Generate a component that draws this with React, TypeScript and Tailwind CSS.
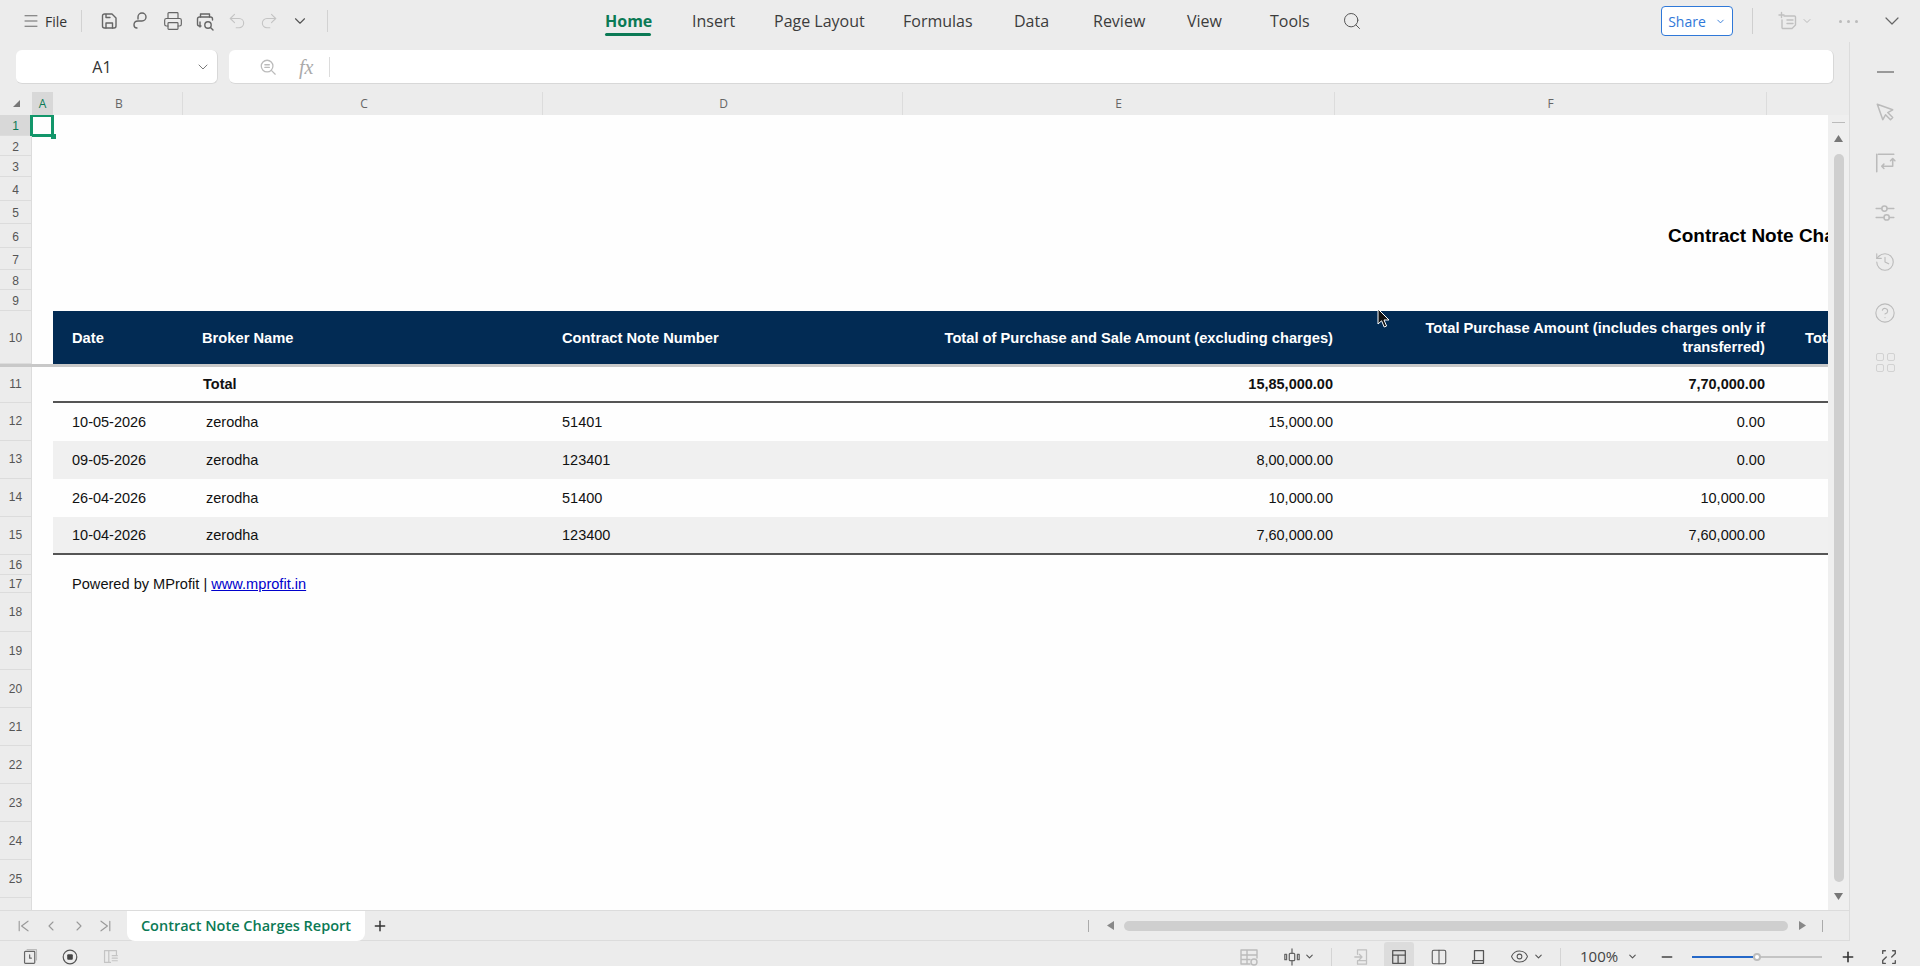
import React from "react";
import { ChevronDown, ChevronLeft, ChevronRight, Search, Plus, Minus, Printer, Undo2, Redo2, History, CircleHelp, Eye, Columns2, Menu } from "lucide-react";

const Svg = ({ s = 20, c = "#666", children, w = 1.4 }: any) => (
  <svg width={s} height={s} viewBox="0 0 20 20" fill="none" stroke={c} strokeWidth={w} strokeLinecap="round" strokeLinejoin="round">
    {children}
  </svg>
);

const rowsTop = [21, 20, 21, 24, 23, 24, 22, 20, 21];

const Cell = ({ w, className = "", children }: any) => (
  <div className={`shrink-0 whitespace-nowrap overflow-hidden ${className}`} style={{ width: w }}>
    {children}
  </div>
);

const COLS = { a: 21, b: 130, c: 360, d: 360, e: 432, f: 432, g: 300 };

const RowHead = ({ n, active }: { n: number; active?: boolean }) => (
  <div className={`w-[32px] shrink-0 h-full flex items-center justify-center text-[12px] border-r border-b border-[#dcdcdc] ${n <= 10 ? "pt-[2px]" : n <= 15 ? "pb-[2px]" : ""} ${active ? "bg-[#d8d8d8] text-[#0b7a55]" : "bg-[#ececec] text-[#555]"}`}>
    {n}
  </div>
);

const data = [
  ["10-05-2026", "zerodha", "51401", "15,000.00", "0.00"],
  ["09-05-2026", "zerodha", "123401", "8,00,000.00", "0.00"],
  ["26-04-2026", "zerodha", "51400", "10,000.00", "10,000.00"],
  ["10-04-2026", "zerodha", "123400", "7,60,000.00", "7,60,000.00"],
];

const sheetFont = "font-['Liberation_Sans',Arial,sans-serif] text-[14.5px] text-[#111]";

function TopBar() {
  return (
    <div className="h-[42px] flex items-center text-[16px] text-[#333]">
      <div className="ml-[22px] w-[18px] text-[#666]"><Menu size={18} strokeWidth={1.3} /></div>
      <span className="ml-[5px] w-[38px] text-[14px]">File</span>
      <div className="h-[22px] w-px bg-[#d2d2d2] -ml-[2px]" />
      <div className="ml-[17px] flex items-center gap-[12px]">
        <Svg><path d="M3.5 5 a2 2 0 0 1 2-2 H13 L17 7 V15 a2 2 0 0 1-2 2 H5.5 a2 2 0 0 1-2-2 Z" /><path d="M7 17 V12 H13.5 V17" /><path d="M7 3.5 V6.5 H11" /></Svg>
        <Svg><path d="M7 8 V6 a4 4 0 1 1 4 4 H7 c-3 0-4 2-4 4 s1.5 3 3 3" /></Svg>
        <Printer size={20} strokeWidth={1.4} color="#666" />
        <Svg><path d="M5.5 6 V3 H14.5 V6" /><path d="M6 15 H4.5 a2 2 0 0 1-2-2 V8 a2 2 0 0 1 2-2 H15.5 a2 2 0 0 1 2 2 V9" /><circle cx="13" cy="14" r="3.2" /><path d="M15.5 16.5 L18 19" /><path d="M5 11 V16" /></Svg>
        <Undo2 size={20} strokeWidth={1.3} color="#c4c4c4" />
        <Redo2 size={20} strokeWidth={1.3} color="#c4c4c4" />
        <ChevronDown size={18} strokeWidth={1.5} color="#555" />
      </div>
      <div className="ml-[18px] h-[22px] w-px bg-[#d2d2d2]" />
      <div className="ml-[277px] flex items-center text-[#3c3c3c]">
        <div className="relative w-[87px]">
          <span className="font-bold text-[#0b7a55]">Home</span>
          <div className="absolute top-[24px] left-0 w-[46px] h-[2.5px] bg-[#0b7a55] rounded" />
        </div>
        <span className="w-[82px]">Insert</span>
        <span className="w-[129px]">Page Layout</span>
        <span className="w-[111px]">Formulas</span>
        <span className="w-[79px]">Data</span>
        <span className="w-[94px]">Review</span>
        <span className="w-[83px]">View</span>
        <span className="w-[72px]">Tools</span>
        <Search size={20} strokeWidth={1.2} color="#555" />
      </div>
      <div className="ml-auto flex items-center">
        <div className="w-[72px] h-[30px] rounded-[4px] border border-[#2f78d8] bg-white flex items-center justify-center gap-[9px] text-[#2f78d8] text-[14px]">
          Share <ChevronDown size={11} strokeWidth={2} />
        </div>
        <div className="ml-[19px] h-[26px] w-px bg-[#cfcfcf]" />
        <div className="ml-[25px]"><Svg c="#c0c0c0"><path d="M6 5 H16.5 a1 1 0 0 1 1 1 V14 L14 17.5 H5 a1 1 0 0 1-1-1 V9" /><path d="M1 4 H6 M3.5 1.5 V6.5" /><path d="M9 9 H15 M9 12.5 H15" /></Svg></div>
        <div className="ml-[3px]"><ChevronDown size={12} strokeWidth={2} color="#bbb" /></div>
        <div className="ml-[26px] flex gap-[5px]">
          <div className="w-[3px] h-[3px] rounded-full bg-[#bbb]" />
          <div className="w-[3px] h-[3px] rounded-full bg-[#bbb]" />
          <div className="w-[3px] h-[3px] rounded-full bg-[#bbb]" />
        </div>
        <div className="ml-[22px] mr-[16px]"><ChevronDown size={24} strokeWidth={1.2} color="#666" /></div>
      </div>
    </div>
  );
}

function FormulaBar() {
  return (
    <div className="h-[50px] pt-[8px] pl-[16px] pr-[15px] flex gap-[11px]">
      <div className="w-[202px] h-[34px] bg-white rounded-[6px] border-b border-r border-[#d8d8d8] flex items-center pr-[6px]">
        <span className="w-[172px] text-center text-[16px] text-[#333]">A1</span>
        <ChevronDown size={16} strokeWidth={1.3} color="#666" className="ml-auto" />
      </div>
      <div className="flex-1 h-[34px] bg-white rounded-[6px] border-b border-r border-[#d8d8d8] flex items-center">
        <div className="ml-[30px]"><Svg c="#bbb" s={18}><circle cx="9" cy="9" r="6.5" /><path d="M14 14 L18 18" /><path d="M6.5 7.5 H11.5 M6.5 10.5 H11.5" /></Svg></div>
        <span className="ml-[22px] text-[20px] italic text-[#aaa] font-['Liberation_Serif',serif]">fx</span>
        <div className="ml-[16px] h-[20px] w-px bg-[#dcdcdc]" />
      </div>
    </div>
  );
}

function ColHeaders() {
  const items: [string, number, string][] = [["B", 130, "pl-[3px]"], ["C", 360, "pl-[3px]"], ["D", 360, "pl-[2px]"], ["E", 432, ""], ["F", 432, ""]];
  return (
    <div className="h-[23px] flex text-[12px] text-[#666]">
      <div className="w-[32px] flex items-center justify-center text-[#777]">
        <svg width="9" height="9" viewBox="0 0 9 9"><path d="M8 1 V8 H1 Z" fill="#777" /></svg>
      </div>
      <div className="w-[21px] bg-[#d8d8d8] text-[#0b7a55] flex items-center justify-center">A</div>
      {items.map(([l, w, p]) => (
        <div key={l} className={`flex items-center justify-center border-r border-[#dcdcdc] ${p}`} style={{ width: w }}>{l}</div>
      ))}
    </div>
  );
}

function Sheet() {
  return (
    <div className="relative h-[795px] flex bg-[#fefefe]">
      <div className={`w-[1828px] flex flex-col overflow-hidden ${sheetFont}`}>
        {rowsTop.map((h, i) => (
          <div key={i} className="flex shrink-0 relative" style={{ height: h }}>
            <RowHead n={i + 1} active={i === 0} />
            {i === 0 && (
              <div className="absolute left-[30px] top-[-1px] w-[24px] h-[23px] border-[3px] border-[#12966a]">
                <div className="absolute -right-[5px] -bottom-[5px] w-[5px] h-[5px] bg-[#12966a]" />
              </div>
            )}
            {i === 5 && (
              <div className="ml-[1636px] font-bold text-[19px] leading-[24px] whitespace-nowrap text-black">Contract Note Charges Report</div>
            )}
          </div>
        ))}
        {/* row 10 */}
        <div className="flex shrink-0 h-[53px]">
          <RowHead n={10} />
          <Cell w={COLS.a} />
          <div className="flex flex-1 bg-[#022b54] text-white font-bold text-[14.7px] items-center pt-[1px]">
            <Cell w={COLS.b} className="pl-[19px]">Date</Cell>
            <Cell w={COLS.c} className="pl-[19px]">Broker Name</Cell>
            <Cell w={COLS.d} className="pl-[19px]">Contract Note Number</Cell>
            <Cell w={COLS.e} className="pr-[2px] text-right">Total of Purchase and Sale Amount (excluding charges)</Cell>
            <Cell w={COLS.f} className="pr-[2px] text-right leading-[19px]">Total Purchase Amount (includes charges only if<br />transferred)</Cell>
            <Cell w={COLS.g} className="pl-[38px]">Total Sale Amount</Cell>
          </div>
        </div>
        <div className="h-[3px] shrink-0 bg-[#c8c8c8]" />
        {/* row 11 */}
        <div className="flex shrink-0 h-[36px]">
          <RowHead n={11} />
          <Cell w={COLS.a} />
          <div className="flex flex-1 items-center font-bold border-b-2 border-[#555] pt-[1px]">
            <Cell w={COLS.b} />
            <Cell w={COLS.c} className="pl-[20px]">Total</Cell>
            <Cell w={COLS.d} />
            <Cell w={COLS.e} className="pr-[2px] text-right">15,85,000.00</Cell>
            <Cell w={COLS.f} className="pr-[2px] text-right">7,70,000.00</Cell>
          </div>
        </div>
        {data.map((r, i) => (
          <div key={i} className="flex shrink-0 h-[38px]">
            <RowHead n={12 + i} />
            <Cell w={COLS.a} />
            <div className={`flex flex-1 items-center pt-[1px] ${i % 2 ? "bg-[#f0f0f0]" : ""} ${i === 3 ? "border-b-2 border-[#555]" : ""}`}>
              <Cell w={COLS.b} className="pl-[19px]">{r[0]}</Cell>
              <Cell w={COLS.c} className="pl-[23px]">{r[1]}</Cell>
              <Cell w={COLS.d} className="pl-[19px]">{r[2]}</Cell>
              <Cell w={COLS.e} className="pr-[2px] text-right">{r[3]}</Cell>
              <Cell w={COLS.f} className="pr-[2px] text-right">{r[4]}</Cell>
            </div>
          </div>
        ))}
        <div className="flex shrink-0 h-[20px]"><RowHead n={16} /></div>
        <div className="flex shrink-0 h-[18px]">
          <RowHead n={17} />
          <Cell w={COLS.a} />
          <div className="pl-[19px] whitespace-nowrap leading-[18px] text-[14.6px]">
            Powered by MProfit | <span className="text-[#0000cc] underline">www.mprofit.in</span>
          </div>
        </div>
        <div className="flex shrink-0 h-[39px]"><RowHead n={18} /></div>
        {[19, 20, 21, 22, 23, 24, 25].map((n) => (
          <div key={n} className="flex shrink-0 h-[38px]"><RowHead n={n} /></div>
        ))}
        <div className="flex flex-1"><div className="w-[32px] bg-[#ececec] border-r border-[#dcdcdc]" /></div>
      </div>
      <div className="w-[21px] bg-[#efefef] flex flex-col items-center">
        <div className="mt-[7px] w-[13px] h-px bg-[#bbb]" />
        <svg className="mt-[12px]" width="9" height="7" viewBox="0 0 9 7"><path d="M4.5 0 L9 7 H0 Z" fill="#777" /></svg>
        <div className="mt-[12px] w-[10px] h-[728px] bg-[#cfcfcf] rounded-full" />
        <svg className="mt-[11px]" width="9" height="7" viewBox="0 0 9 7"><path d="M4.5 7 L9 0 H0 Z" fill="#777" /></svg>
      </div>
      <svg className="absolute left-[1377px] top-[193px]" width="14" height="21" viewBox="0 0 14 21">
        <path d="M1 1 V16 L4.6 12.8 L7.2 19 L9.6 18 L7 12 H12 Z" fill="#111" stroke="#fff" strokeWidth="1" />
      </svg>
    </div>
  );
}

function TabBar() {
  return (
    <div className="h-[31px] flex border-b border-[#dcdcdc] border-t">
      <div className="w-[127px] flex items-center pl-[16px] text-[#999]">
        <Svg s={16} c="#999"><path d="M4 4 V16 M15 4 L7 10 L15 16" /></Svg>
        <ChevronLeft size={16} strokeWidth={1.6} className="ml-[11px]" />
        <ChevronRight size={16} strokeWidth={1.6} className="ml-[12px]" />
        <div className="ml-[10px]"><Svg s={16} c="#999"><path d="M16 4 V16 M5 4 L13 10 L5 16" /></Svg></div>
      </div>
      <div className="w-[238px] h-[30px] bg-white rounded-b-[8px] flex items-center justify-center font-semibold text-[14.5px] text-[#0b7a55]">
        Contract Note Charges Report
      </div>
      <div className="ml-[7px] flex items-center"><Plus size={16} strokeWidth={2.2} color="#333" /></div>
      <div className="ml-[700px] h-[12px] w-px bg-[#aaa] self-center" />
      <svg className="ml-[18px] self-center" width="7" height="9" viewBox="0 0 7 9"><path d="M7 0 V9 L0 4.5 Z" fill="#888" /></svg>
      <div className="ml-[10px] w-[664px] h-[10px] rounded-full bg-[#cfcfcf] self-center" />
      <svg className="ml-[11px] self-center" width="7" height="9" viewBox="0 0 7 9"><path d="M0 0 V9 L7 4.5 Z" fill="#888" /></svg>
      <div className="ml-[16px] h-[12px] w-px bg-[#aaa] self-center" />
    </div>
  );
}

function Rail() {
  return (
    <div className="w-[71px] border-l border-[#dcdcdc] flex flex-col items-center">
      <div className="mt-[29px] w-[17px] h-[2px] bg-[#999]" />
      <div className="mt-[28px]"><Svg s={22} c="#bbb"><path d="M3 3 L17 8 L12.5 10.5 L17 15 L15 17 L10.5 12.5 L8 17 Z" /></Svg></div>
      <div className="mt-[29px]"><Svg s={22} c="#bbb"><path d="M4 2 H18 M2.5 2 V18 M17 6 V13 H7 M15 8 L17 6 L19 8 M9 11 L7 13 L9 15" /></Svg></div>
      <div className="mt-[28px]"><Svg s={22} c="#bbb"><path d="M2 6 H7 M12 6 H18 M2 14 H9 M14 14 H18" /><circle cx="9.5" cy="6" r="2.4" /><circle cx="11.5" cy="14" r="2.4" /></Svg></div>
      <div className="mt-[27px]"><History size={22} strokeWidth={1.2} color="#bbb" /></div>
      <div className="mt-[29px]"><CircleHelp size={22} strokeWidth={1.2} color="#bbb" /></div>
      <div className="mt-[29px] grid grid-cols-2 gap-[3px]">
        {[0, 1, 2, 3].map((i) => <div key={i} className="w-[8px] h-[8px] rounded-[2px] border border-[#d2d2d2]" />)}
      </div>
    </div>
  );
}

function StatusBar() {
  return (
    <div className="h-[25px] pt-[6px] flex items-center text-[#555]">
      <div className="ml-[22px]"><Svg s={17} c="#666"><rect x="3" y="4" width="12" height="14" rx="1" /><path d="M6 2 H17 V14" stroke="#bbb" /><path d="M9 8 V12 H11" /></Svg></div>
      <div className="ml-[23px]"><svg width="16" height="16" viewBox="0 0 16 16"><circle cx="8" cy="8" r="6.8" fill="none" stroke="#555" strokeWidth="1.2" /><rect x="5.2" y="5.2" width="5.6" height="5.6" rx="1" fill="#444" /></svg></div>
      <div className="ml-[24px]"><Svg s={17} c="#c4c4c4"><path d="M17 8 V3 H3 V17 H10 M8 3 V17 M12 12 H18 M12 15 H18 M12 9 H18" /></Svg></div>
      <div className="ml-[1120px]"><Svg s={20} c="#bbb"><path d="M2 3 H18 V11 M2 3 V17 H11 M2 8 H18 M2 12.5 H11 M8 3 V17" /><circle cx="15" cy="15" r="3" /></Svg></div>
      <div className="ml-[24px]"><Svg s={18} c="#666"><rect x="7" y="6" width="6" height="8" rx="1" /><path d="M10 1 V6 M10 14 V19 M4 7 V13 H2 V7 Z M16 7 V13 H18 V7 Z" /></Svg></div>
      <ChevronDown size={11} strokeWidth={2.4} color="#555" className="ml-[3px]" />
      <div className="ml-[16px] h-[18px] w-px bg-[#d4d4d4]" />
      <div className="ml-[21px]"><Svg s={18} c="#c0c0c0"><path d="M5 7 V2 H15 V18 H5 V15 M2 10 H9 M7 7 L10 10 L7 13 M5 14 H15" /></Svg></div>
      <div className="ml-[13px] w-[30px] h-[30px] bg-[#dcdcdc] rounded-t-[3px] flex items-center justify-center"><Svg s={18} c="#555"><rect x="3" y="3" width="14" height="14" /><path d="M3 8 H17 M9 8 V17" /></Svg></div>
      <div className="ml-[16px]"><Columns2 size={18} strokeWidth={1.4} color="#555" /></div>
      <div className="ml-[22px]"><Svg s={18} c="#555"><path d="M6 3 H15 V17 H3 V14 H14" /><path d="M5 3 V14" /></Svg></div>
      <div className="ml-[22px]"><Eye size={19} strokeWidth={1.3} color="#555" /></div>
      <ChevronDown size={11} strokeWidth={2.4} color="#555" className="ml-[4px]" />
      <div className="ml-[16px] h-[18px] w-px bg-[#d4d4d4]" />
      <span className="ml-[19px] text-[15px] text-[#444]">100%</span>
      <ChevronDown size={11} strokeWidth={2.4} color="#555" className="ml-[9px]" />
      <Minus size={16} strokeWidth={2.4} color="#444" className="ml-[21px]" />
      <div className="ml-[17px] w-[130px] h-[2px] bg-[#c4c4c4] flex items-center">
        <div className="w-[61px] h-[2px] bg-[#2568c8]" />
        <div className="w-[8px] h-[8px] rounded-full bg-white border-2 border-[#bcbcbc] shrink-0" />
      </div>
      <Plus size={16} strokeWidth={2.4} color="#333" className="ml-[18px]" />
      <div className="ml-[24px]"><Svg s={18} c="#555" w={1.5}><path d="M3 6 V3 H6 M14 3 H17 V6 L13 10 M17 14 V17 H14 M6 17 H3 V14 L7 10" /></Svg></div>
    </div>
  );
}

export default function App() {
  return (
    <div className="w-[1920px] h-[966px] overflow-hidden bg-[#ececec] font-['Open_Sans',sans-serif] flex flex-col">
      <TopBar />
      <div className="flex h-[899px]">
        <div className="w-[1849px] flex flex-col">
          <FormulaBar />
          <ColHeaders />
          <Sheet />
          <TabBar />
        </div>
        <Rail />
      </div>
      <StatusBar />
    </div>
  );
}
